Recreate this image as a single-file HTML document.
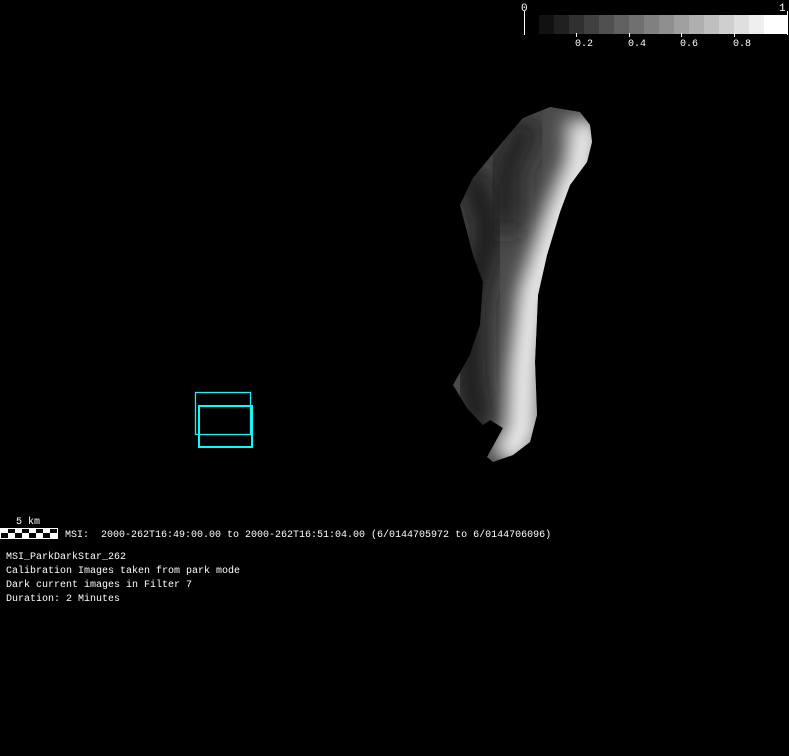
<!DOCTYPE html>
<html><head><meta charset="utf-8"><style>
html,body{margin:0;padding:0;background:#000;}
body{width:789px;height:756px;position:relative;overflow:hidden;font-family:"Liberation Mono","DejaVu Sans Mono",monospace;color:#fff;}
.t{position:absolute;font-size:10px;line-height:12px;white-space:pre;}
</style></head><body>
<svg width="789" height="756" style="position:absolute;left:0;top:0">
<defs>
<clipPath id="ast"><polygon points="550,107 580,112 590,125 592,142 587,162 570,185 560,212 547,255 538,295 535,362 537,415 530,442 513,455 493,462 487,457 503,428 490,420 483,425 467,408 453,385 470,355 480,325 483,282 473,255 460,205 473,178 500,145 523,118"/></clipPath>
<filter id="b8" x="-50%" y="-50%" width="200%" height="200%"><feGaussianBlur stdDeviation="8"/></filter>
<filter id="b12" x="-50%" y="-50%" width="200%" height="200%"><feGaussianBlur stdDeviation="12"/></filter>
</defs>
<rect x="539" y="15" width="16" height="19" fill="#111"/>
<rect x="554" y="15" width="15" height="19" fill="#202020"/>
<rect x="569" y="15" width="15" height="19" fill="#303030"/>
<rect x="584" y="15" width="15" height="19" fill="#404040"/>
<rect x="599" y="15" width="15" height="19" fill="#505050"/>
<rect x="614" y="15" width="15" height="19" fill="#606060"/>
<rect x="629" y="15" width="15" height="19" fill="#707070"/>
<rect x="644" y="15" width="15" height="19" fill="#808080"/>
<rect x="659" y="15" width="15" height="19" fill="#8f8f8f"/>
<rect x="674" y="15" width="15" height="19" fill="#9f9f9f"/>
<rect x="689" y="15" width="15" height="19" fill="#afafaf"/>
<rect x="704" y="15" width="15" height="19" fill="#bfbfbf"/>
<rect x="719" y="15" width="15" height="19" fill="#cfcfcf"/>
<rect x="734" y="15" width="15" height="19" fill="#dfdfdf"/>
<rect x="749" y="15" width="15" height="19" fill="#efefef"/>
<rect x="764" y="15" width="24" height="19" fill="#fff"/>
<line x1="524.5" y1="11" x2="524.5" y2="35" stroke="#fff"/>
<line x1="787.5" y1="11" x2="787.5" y2="35" stroke="#fff"/>
<line x1="576.5" y1="33" x2="576.5" y2="37" stroke="#fff"/>
<line x1="629.5" y1="33" x2="629.5" y2="37" stroke="#fff"/>
<line x1="681.5" y1="33" x2="681.5" y2="37" stroke="#fff"/>
<line x1="734.5" y1="33" x2="734.5" y2="37" stroke="#fff"/>
<g clip-path="url(#ast)">
<rect x="440" y="100" width="170" height="370" fill="#4a4a4a"/>
<polyline points="470,170 490,230 470,300 470,380 480,430" fill="none" stroke="#1c1c1c" stroke-width="30" filter="url(#b12)"/>
<polyline points="530,120 505,170 505,230" fill="none" stroke="#222" stroke-width="30" filter="url(#b12)"/>
<polyline points="582,118 582,160 560,215 535,290 525,370 522,430 505,460" fill="none" stroke="#9a9a9a" stroke-width="40" filter="url(#b8)"/>
<polyline points="585,125 580,165 558,220 533,295 524,370 522,430 508,455" fill="none" stroke="#f4f4f4" stroke-width="18" filter="url(#b8)"/>
</g>
<rect x="195.5" y="392.5" width="55" height="42" fill="none" stroke="#2ee" stroke-width="1.3"/>
<rect x="199" y="406" width="53" height="41" fill="none" stroke="#0ff" stroke-width="2"/>
<g fill="#fff">
<rect x="0" y="528" width="58" height="11" fill="#fff"/>
<rect x="1" y="529" width="56" height="9" fill="#000"/>
<rect x="1" y="529" width="7" height="4"/><rect x="15" y="529" width="7" height="4"/><rect x="29" y="529" width="7" height="4"/><rect x="43" y="529" width="7" height="4"/>
<rect x="8" y="533" width="7" height="5"/><rect x="22" y="533" width="7" height="5"/><rect x="36" y="533" width="7" height="5"/><rect x="50" y="533" width="7" height="5"/>
</g>
</svg>
<div class="t" style="left:521px;top:3px;font-size:11px">0</div>
<div class="t" style="left:779px;top:3px;font-size:11px">1</div>
<div class="t" style="left:575px;top:39px">0.2</div>
<div class="t" style="left:628px;top:39px">0.4</div>
<div class="t" style="left:680px;top:39px">0.6</div>
<div class="t" style="left:733px;top:39px">0.8</div>
<div class="t" style="left:16px;top:517px">5 km</div>
<div class="t" style="left:65px;top:530px">MSI:  2000-262T16:49:00.00 to 2000-262T16:51:04.00 (6/0144705972 to 6/0144706096)</div>
<div class="t" style="left:6px;top:552px">MSI_ParkDarkStar_262</div>
<div class="t" style="left:6px;top:566px">Calibration Images taken from park mode</div>
<div class="t" style="left:6px;top:580px">Dark current images in Filter 7</div>
<div class="t" style="left:6px;top:594px">Duration: 2 Minutes</div>
</body></html>
